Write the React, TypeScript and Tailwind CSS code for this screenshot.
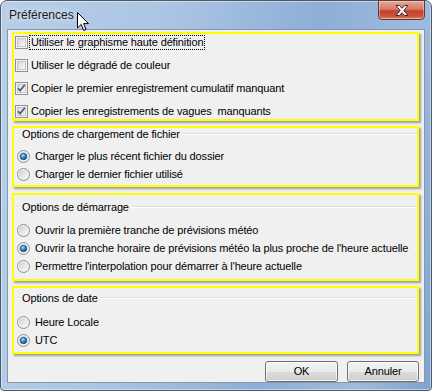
import React from "react";

const font = { fontFamily: '"Liberation Sans", Arial, sans-serif' };

function CheckBox({ checked }: { checked?: boolean }) {
  return (
    <svg width="13" height="13" viewBox="0 0 13 13" className="shrink-0">
      <defs>
        <linearGradient id="cbg" x1="0" y1="0" x2="1" y2="1">
          <stop offset="0" stopColor="#d4d4d4" />
          <stop offset="1" stopColor="#fafafa" />
        </linearGradient>
      </defs>
      <rect x="0.5" y="0.5" width="12" height="12" fill="#f4f4f4" stroke="#8e8f8f" />
      <rect x="2.5" y="2.5" width="8" height="8" fill="url(#cbg)" stroke="#c6c6c6" />
      {checked && (
        <path d="M3 6.2 L5.2 8.6 L9.8 2.8" fill="none" stroke="#4b5f8f" strokeWidth="1.7" />
      )}
    </svg>
  );
}

function Radio({ checked }: { checked?: boolean }) {
  return (
    <svg width="13" height="13" viewBox="0 0 13 13" className="shrink-0">
      <defs>
        <linearGradient id="rbg" x1="0" y1="0" x2="1" y2="1">
          <stop offset="0" stopColor="#d0d0d0" />
          <stop offset="1" stopColor="#fbfbfb" />
        </linearGradient>
        <radialGradient id="rdot" cx="0.4" cy="0.35" r="0.7">
          <stop offset="0" stopColor="#9fe0ff" />
          <stop offset="0.5" stopColor="#2a8ad0" />
          <stop offset="1" stopColor="#113c6a" />
        </radialGradient>
      </defs>
      <circle cx="6.5" cy="6.5" r="6" fill="#f2f2f2" stroke="#8e8f8f" />
      <circle cx="6.5" cy="6.5" r="4.5" fill="url(#rbg)" />
      {checked && <circle cx="6.5" cy="6.5" r="3.3" fill="url(#rdot)" stroke="#1b3e62" strokeWidth="0.6" />}
    </svg>
  );
}

function CheckRow({ label, checked, focus }: { label: string; checked?: boolean; focus?: boolean }) {
  return (
    <div className="flex items-center h-[16px] pl-[1px]">
      <CheckBox checked={checked} />
      <span
        className={
          focus
            ? "ml-[1px] px-[1px] leading-[13px] whitespace-pre border border-dotted border-black"
            : "ml-[2px] px-[1px] leading-[13px] whitespace-pre"
        }
      >
        {label}
      </span>
    </div>
  );
}

function RadioRow({ label, checked }: { label: string; checked?: boolean }) {
  return (
    <div className="flex items-center h-[18px] pl-[3px]">
      <Radio checked={checked} />
      <span className="ml-[5px] whitespace-pre">{label}</span>
    </div>
  );
}

function Legend({ text }: { text: string }) {
  return (
    <div className="flex items-center h-[12px]">
      <div className="w-[6px] h-[2px] border-t border-[#d5dfe5] border-b border-b-white" />
      <span className="px-[2px] leading-[12px] whitespace-pre">{text}</span>
      <div className="flex-1 h-[2px] border-t border-[#d5dfe5] border-b border-b-white" />
    </div>
  );
}

function Box({ className, children }: { className: string; children: React.ReactNode }) {
  return (
    <div className={`border-2 border-[#ffff00] shadow-[2px_2px_2px_rgba(0,0,0,0.35)] flex flex-col ${className}`}>
      {children}
    </div>
  );
}

function WinButton({ label, w }: { label: string; w: string }) {
  return (
    <div
      className={`${w} h-[21px] rounded-[3px] border border-[#707070] flex items-center justify-center text-[11px] bg-[linear-gradient(#f2f2f2_0%,#ebebeb_50%,#dddddd_51%,#cfcfcf_100%)] shadow-[inset_0_0_0_1px_rgba(255,255,255,0.7)]`}
    >
      {label}
    </div>
  );
}

export default function App() {
  return (
    <div className="w-[432px] h-[391px] bg-white" style={font}>
      <div className="relative w-[432px] h-[391px] rounded-t-[7px] rounded-b-[4px] border border-[#4d5a6a] bg-[linear-gradient(100deg,#b9cfe8_0%,#aac4e3_35%,#8eaed7_65%,#9fbbdf_85%,#7fa3cd_100%)] shadow-[inset_0_0_0_1px_rgba(255,255,255,0.45)] flex flex-col px-[6px] pb-[7px]">
        <div className="h-[28px] flex items-center pl-[2px] text-[12px] text-[#1b1b1b] [text-shadow:0_0_6px_rgba(255,255,255,0.9)]">
          Préférences
        </div>

        <div className="absolute top-[-1px] right-[6px] w-[47px] h-[20px] rounded-b-[4px] border border-[#5a3b36] bg-[linear-gradient(#e6a699_0%,#d57c68_45%,#c2402a_55%,#d0533b_85%,#e08a70_100%)] shadow-[inset_0_0_0_1px_rgba(255,255,255,0.35)] flex items-center justify-center">
          <svg width="14" height="11" viewBox="0 0 14 11">
            <path
              d="M1 0.5 H4.5 L7 3.3 L9.5 0.5 H13 L8.8 5.5 L13 10.5 H9.5 L7 7.7 L4.5 10.5 H1 L5.2 5.5 Z"
              fill="#ffffff"
              stroke="#3c2a28"
              strokeWidth="1"
            />
          </svg>
        </div>

        <svg className="absolute left-[76px] top-[11px]" width="13" height="20" viewBox="0 0 13 20">
          <path d="M0.5 0.5 V16 L4.2 12.4 L6.7 18.5 L9 17.5 L6.6 11.6 H11.5 Z" fill="#fff" stroke="#000" strokeWidth="1" />
        </svg>

        <div className="flex-1 border border-[#8597ad] bg-[#f0f0f0] text-[11px] tracking-[-0.13px] text-black flex flex-col pl-[4px] pr-[5px] pt-[2px]">
          <Box className="h-[89px] gap-[7px]">
            <CheckRow label="Utiliser le graphisme haute définition" focus />
            <CheckRow label="Utiliser le dégradé de couleur" />
            <CheckRow label="Copier le premier enregistrement cumulatif manquant" checked />
            <CheckRow label="Copier les enregistrements de vagues  manquants" checked />
          </Box>

          <Box className="mt-[5px] h-[61px]">
            <Legend text="Options de chargement de fichier" />
            <div className="mt-[7px]">
              <RadioRow label="Charger le plus récent fichier du dossier" checked />
              <RadioRow label="Charger le dernier fichier utilisé" />
            </div>
          </Box>

          <Box className="mt-[6px] h-[88px] pt-[6px]">
            <Legend text="Options de démarrage" />
            <div className="mt-[8px]">
              <RadioRow label="Ouvrir la première tranche de prévisions météo" />
              <RadioRow label="Ouvrir la tranche horaire de prévisions météo la plus proche de l'heure actuelle" checked />
              <RadioRow label="Permettre l'interpolation pour démarrer à l'heure actuelle" />
            </div>
          </Box>

          <Box className="mt-[5px] h-[68px] pt-[4px]">
            <Legend text="Options de date" />
            <div className="mt-[9px]">
              <RadioRow label="Heure Locale" />
              <RadioRow label="UTC" checked />
            </div>
          </Box>

          <div className="mt-[7px] flex justify-end gap-[9px]">
            <WinButton label="OK" w="w-[73px]" />
            <WinButton label="Annuler" w="w-[72px]" />
          </div>
        </div>
      </div>
    </div>
  );
}
